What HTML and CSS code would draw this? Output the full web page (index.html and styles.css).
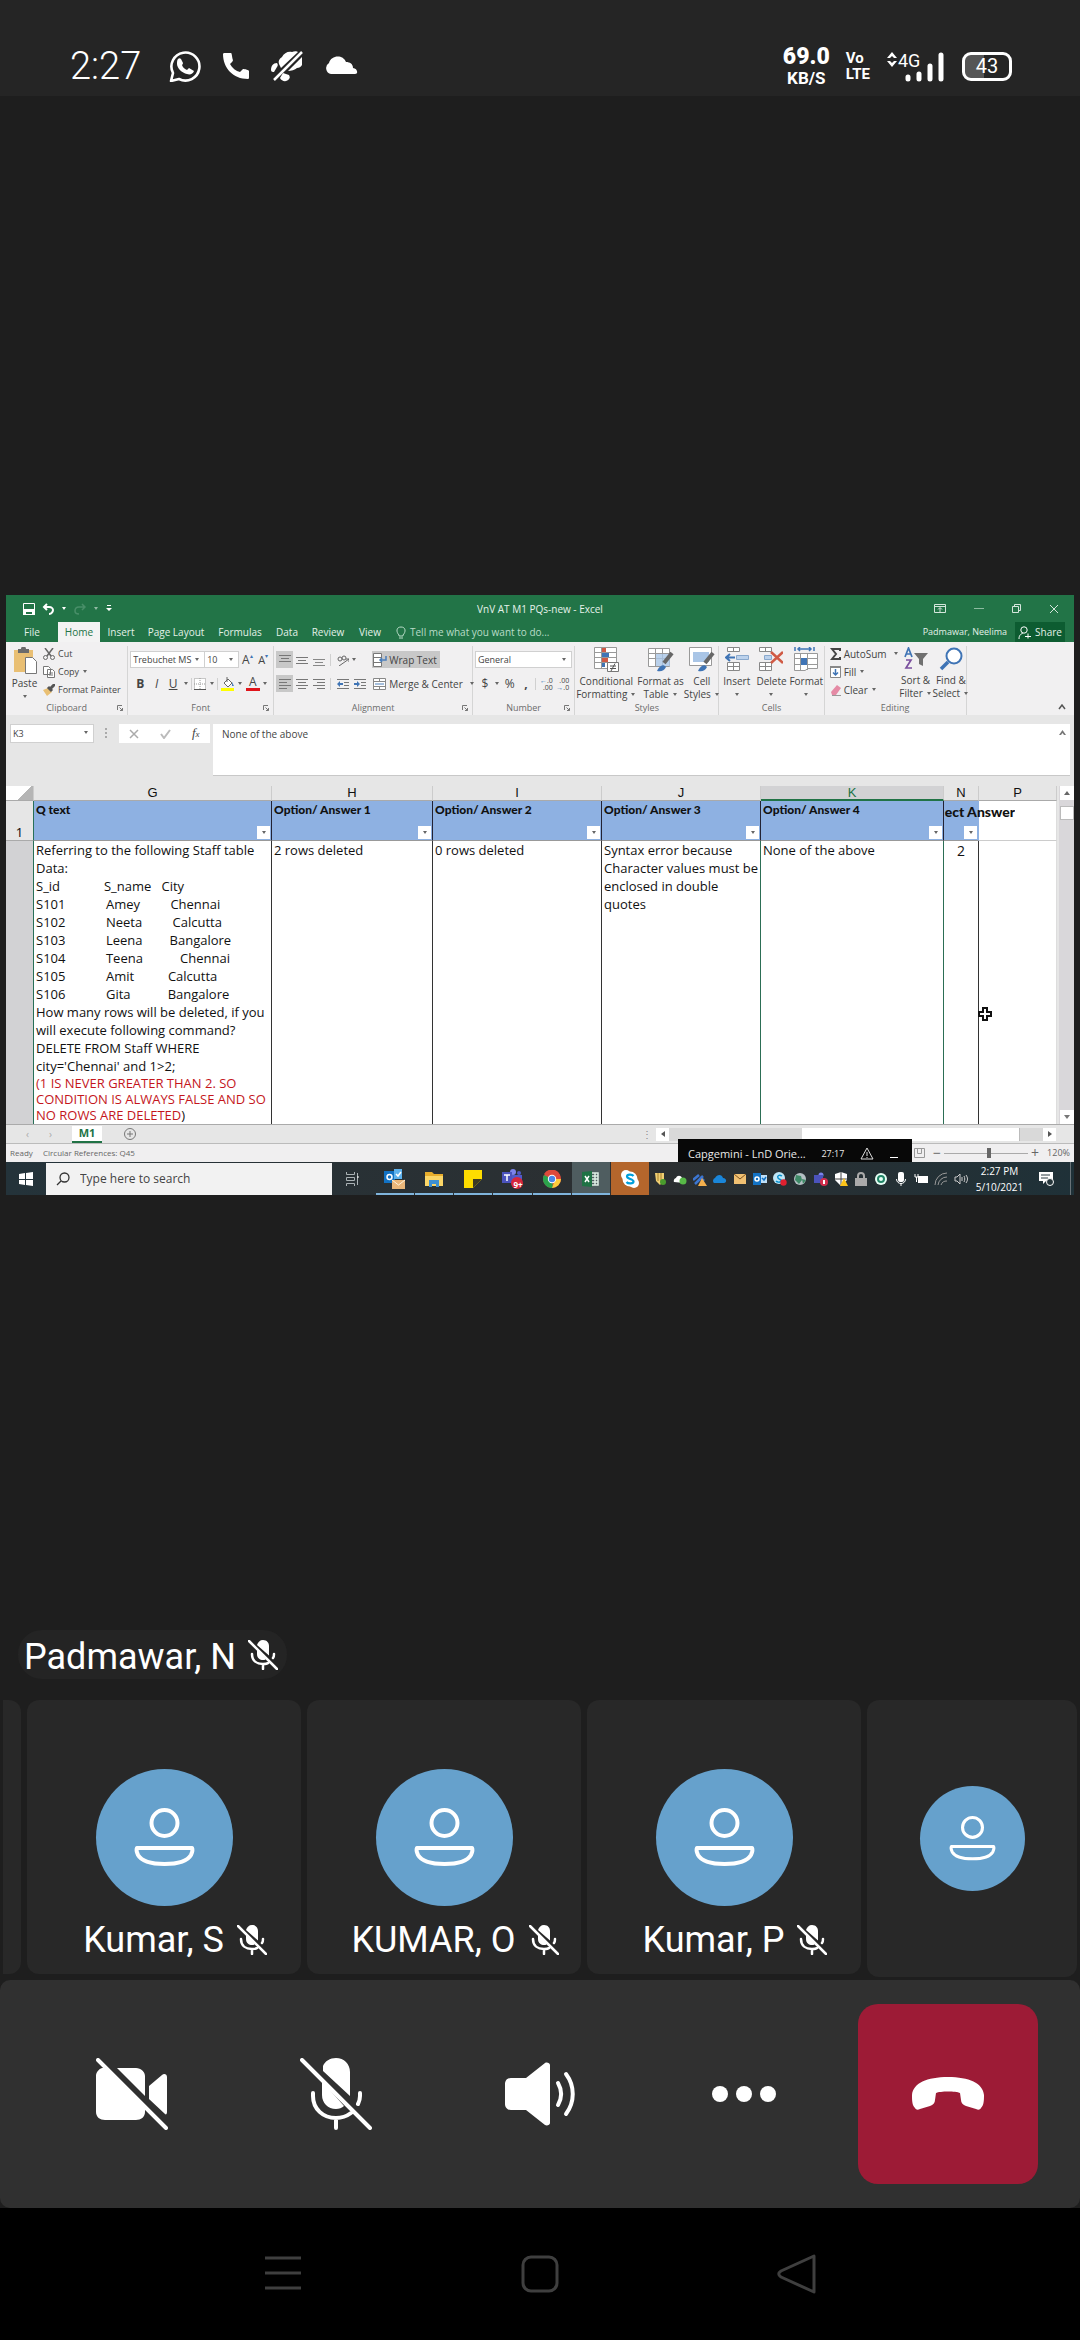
FILE: index.html
```html
<!DOCTYPE html>
<html lang="en">
<head>
<meta charset="utf-8">
<meta name="viewport" content="width=device-width, initial-scale=1">
<title>Meeting</title>
<link rel="stylesheet" href="styles.css">
</head>
<body>
<svg class="defs" aria-hidden="true">
  <symbol id="mic-off" viewBox="0 0 72 72">
    <path fill="currentColor" d="M23 8c2-5 7-8 13-8 8 0 14 6 14 14v24L23 13zM22 23v14c0 8 6 14 14 14 3 0 6-1 8-3z"/>
    <path fill="none" stroke="currentColor" stroke-width="4" stroke-linecap="round" d="M13 35v3c0 13 10 22 23 22 6 0 11-2 15-5M60 35v3c0 3-1 6-2 8M36 60v10M2 2l68 68"/>
  </symbol>
  <symbol id="mic-off-bold" viewBox="0 0 30 30">
    <path fill="currentColor" d="M9 5c1-3 3-5 6-5 4 0 6 3 6 6v9.500zM9 10v4c0 4 3 6 6 6 1 0 2 0 3-1z"/>
    <path fill="none" stroke="currentColor" stroke-width="2.500" stroke-linecap="round" d="M4 14c0 7 5 10 11 10 2 0 4 0 5-1M26 14c0 1 0 3-1 4M15 24v5M1 1l28 28"/>
  </symbol>
  <symbol id="person" viewBox="0 0 137 137">
    <g fill="none" stroke="#fff" stroke-width="4"><circle cx="68.500" cy="54" r="13"/><path stroke-linejoin="round" d="M41 79h55c1 2 0 5-1 7-4 7-14 9-26.500 9S46 93 42 86c-1-2-2-5-1-7z"/></g>
  </symbol>
  <symbol id="caret" viewBox="0 0 6 4"><path fill="#666" d="M1 0h4L3 3z"/></symbol>
  <symbol id="lines" viewBox="0 0 12 12"><path stroke="#777" d="M0 1.500h12M2 4.500h8M0 7.500h12M2 10.500h8"/></symbol>
  <symbol id="launcher" viewBox="0 0 6 6"><path fill="none" stroke="#777" d="M.5 5V.5H5M2.500 2.500l3 3M5.500 3v2.500H3"/></symbol>
</svg>

<header class="statusbar">
  <div class="status-left">
    <time class="clock">2:27</time>
    <svg width="32" height="32" viewBox="0 0 32 32" fill="none" stroke="#fff"><path stroke-width="2.600" stroke-linejoin="round" d="M2 31l2-8A14 14 0 1 1 10 29z"/><path fill="#fff" stroke="none" d="M9 9c1-1 2-1 3 0l2 4c0 1-1 2-1 2 1 3 3 4 5 5l2-2 5 3c-1 3-4 4-7 3-5-1-10-6-10-10 0-2 0-4 1-5z"/></svg>
    <svg width="26" height="28" viewBox="0 0 26 28" fill="#fff"><path d="M0 2c0-1 1-1 2-1h6c1 0 1 5 2 7 0 1-1 2-3 4 2 4 6 7 10 8l3-3c2 0 6 1 6 2v6c0 1 0 2-1 2C10 27 0 16 0 2z"/></svg>
    <svg width="32" height="32" viewBox="0 0 32 32"><path fill="#fff" d="M8 14c-1-3 0-5 3-7 2-4 6-6 10-5 2-1 5-1 6 0L10 18zM31 7v8c-1 2-3 3-5 3-2 2-6 3-9 3zM6 13c-4 0-6 3-6 7 0 2 2 2 3 2l3-5c1-1 1-3 0-4zM12 23l6 2c1 2 1 3 0 4-2 3-7 3-9-1z"/><path stroke="#fff" stroke-width="2.500" d="M3 30L31 2"/></svg>
    <svg width="33" height="20" viewBox="0 0 33 20" fill="#fff"><path d="M6 18a6 6 0 0 1-2-11C6-1 18-2 21 6c4 0 7 2 7 6 4 0 6 6 2 6z"/></svg>
  </div>
  <div class="status-right">
    <div class="speed"><b>69.0</b><small>KB/S</small></div>
    <div class="volte"><span>Vo</span><span>LTE</span></div>
    <svg class="signal" width="60" height="34" viewBox="0 0 60 34"><path fill="#fff" d="M1 9l5-6 5 6H8L6 7 4 9zM1 12h3l2 2 2-2h3l-5 6z"/><g stroke="#fff" stroke-width="5" stroke-linecap="round"><path d="M22 28v2M33 25v5M44 17v13M55 6v24"/></g><text x="12" y="18" fill="#fff">4G</text></svg>
    <div class="battery">43</div>
  </div>
</header>

<main class="stage">
  <section class="desktop" aria-label="Shared screen">
    <div class="titlebar">
      <div class="quick">
        <svg width="12" height="12" viewBox="0 0 12 12"><path fill="none" stroke="#fff" d="M.5.5h11v11H.5z"/><path fill="#fff" d="M0 6h12v6H9V9H3v3H0z"/></svg>
        <svg width="12" height="12" viewBox="0 0 12 12"><path fill="none" stroke="#fff" stroke-width="2" d="M5 1L2 4l3 3M2 4h5c3 0 4 2 4 3s-1 4-4 4"/></svg>
        <svg class="white" width="6" height="4"><use href="#caret"/></svg>
        <svg class="faint" width="12" height="12" viewBox="0 0 12 12"><path fill="none" stroke="#6fa98a" stroke-width="1.500" d="M8 1l3 3-3 3M11 4H5C2 4 1 6 1 8s1 3 4 3"/></svg>
        <svg class="dim" width="6" height="4"><use href="#caret"/></svg>
        <svg width="6" height="7" viewBox="0 0 6 7" fill="#fff"><path d="M1 0h4v1H1zM0 3h6L3 6z"/></svg>
      </div>
      <h1>VnV AT M1 PQs-new - Excel</h1>
      <div class="winbtns">
        <button aria-label="Ribbon options"><svg width="12" height="9" viewBox="0 0 12 9" fill="none" stroke="#d5e6dc"><path d="M.5.5h11v8H.5zM.5 2.500h11M6 8V4M4 5.500l2-2 2 2"/></svg></button>
        <button aria-label="Minimize"><svg width="10" height="9" viewBox="0 0 10 9" stroke="#8dbba0"><path d="M0 4.500h10"/></svg></button>
        <button aria-label="Restore"><svg width="9" height="9" viewBox="0 0 9 9" fill="none" stroke="#d5e6dc"><path d="M.5 2.500h6v6h-6zM2.500 2V.5h6v6H7"/></svg></button>
        <button aria-label="Close"><svg width="10" height="10" viewBox="0 0 10 10" stroke="#d5e6dc"><path d="M1 1l8 8M9 1L1 9"/></svg></button>
      </div>
    </div>
    <nav class="tabs">
      <a class="tab file" href="#">File</a><a class="tab home" href="#">Home</a><a class="tab insert" href="#">Insert</a><a class="tab layout" href="#">Page Layout</a><a class="tab formulas" href="#">Formulas</a><a class="tab data" href="#">Data</a><a class="tab review" href="#">Review</a><a class="tab view" href="#">View</a>
      <a class="tell" href="#"><svg width="10" height="13" viewBox="0 0 10 13" fill="none" stroke="#b9dcc8"><path d="M3 9C0 6 0 1 5 1s5 5 2 8v1H3zM3 12h4"/></svg>Tell me what you want to do...</a>
      <span class="user">Padmawar, Neelima</span>
      <button class="share"><svg width="13" height="13" viewBox="0 0 13 13" fill="none" stroke="#fff"><circle cx="6" cy="4" r="3.200"/><path d="M1 13c0-4 2-5 4-6M7 10.500h6M10 7.500v5"/></svg>Share</button>
    </nav>

    <div class="ribbon">
      <section class="group g-clip">
        <div class="body">
          <button class="big"><svg width="24" height="27" viewBox="0 0 24 27"><path fill="#e9bf73" d="M1 3h19v22H1z"/><path fill="#6b6b6b" d="M5 2h3a2.500 2.500 0 0 1 5 0h3v4H5z"/><path fill="#fff" stroke="#777" d="M12.500 10.500h7l4 4v12h-11z"/></svg>Paste<svg class="c" width="6" height="4"><use href="#caret"/></svg></button>
          <div class="stack">
            <button><svg width="12" height="12" viewBox="0 0 12 12" fill="none" stroke="#666"><path stroke-width="1.500" d="M2 0l6 8M10 0L4 8"/><circle cx="2.500" cy="9.500" r="2"/><circle cx="9.500" cy="9.500" r="2"/></svg>Cut</button>
            <button><svg width="12" height="12" viewBox="0 0 12 12" fill="#fff" stroke="#777"><path d="M.5.5h5l2 2v6h-7zM4.500 3.500h5l2 2v6h-7zM6 7h4M6 9h4"/></svg>Copy <svg width="6" height="4"><use href="#caret"/></svg></button>
            <button><svg width="12" height="12" viewBox="0 0 12 12"><path fill="#e9bf73" d="M0 6l5-2 4 4-5 4z"/><path stroke="#555" stroke-width="3" d="M5 3l4 4M8 4l4-4"/></svg>Format Painter</button>
          </div>
        </div>
        <h2>Clipboard<svg width="6" height="6"><use href="#launcher"/></svg></h2>
      </section>
      <section class="group g-font">
        <div class="body rows">
          <div class="row">
            <label class="combo face"><select aria-label="Font"><option>Trebuchet MS</option></select><svg width="6" height="4"><use href="#caret"/></svg></label>
            <label class="combo size"><select aria-label="Font size"><option>10</option></select><svg width="6" height="4"><use href="#caret"/></svg></label>
            <button class="grow a1">A<sup>▴</sup></button><button class="grow a2">A<sup>▾</sup></button>
          </div>
          <div class="row spread">
            <button><b>B</b></button><button><i>I</i></button><button><u>U</u></button><svg width="6" height="4"><use href="#caret"/></svg><hr>
            <svg width="12" height="12" viewBox="0 0 12 12" fill="#fff" stroke="#999"><path stroke-dasharray="1 1" d="M.5.5h11v11H.5zM6 0v12M0 6h12"/><path stroke="#555" d="M0 11.500h12"/></svg><svg width="6" height="4"><use href="#caret"/></svg><hr>
            <svg width="14" height="14" viewBox="0 0 14 14"><path fill="#fff" stroke="#666" d="M3 6l4-4 4 4-4 4zM6 0v5"/><path fill="#4a7ebb" d="M11 5l2 4h-2z"/><path fill="#ff0" d="M0 11h13v3H0z"/></svg><svg width="6" height="4"><use href="#caret"/></svg>
            <button class="red">A</button><svg width="6" height="4"><use href="#caret"/></svg>
          </div>
        </div>
        <h2>Font<svg width="6" height="6"><use href="#launcher"/></svg></h2>
      </section>
      <section class="group g-align">
        <div class="body rows">
          <div class="row">
            <div class="tools">
              <button class="ic on"><svg width="12" height="12" viewBox="0 0 12 12"><path stroke="#777" d="M0 1.500h12M2 4.500h8M0 7.500h12"/></svg></button>
              <button class="ic"><svg width="12" height="12" viewBox="0 0 12 12"><path stroke="#777" d="M0 3.500h12M2 6.500h8M0 9.500h12"/></svg></button>
              <button class="ic"><svg width="12" height="12" viewBox="0 0 12 12"><path stroke="#888" d="M0 5.500h12M2 8.500h8M0 11.500h12"/></svg></button><hr>
              <button class="ic"><svg width="12" height="12" viewBox="0 0 12 12" fill="none" stroke="#666"><circle cx="3" cy="5" r="2"/><circle cx="7" cy="4" r="2"/><path d="M2 12L12 5M9 5h3v3"/></svg></button><svg width="6" height="4"><use href="#caret"/></svg>
            </div>
            <button class="wide on"><svg width="14" height="14" viewBox="0 0 14 14" fill="#fff" stroke="#777"><path d="M.5.5h8v13h-8zM.5 4.500h8M.5 9.500h8"/><path fill="none" stroke="#4a7ebb" stroke-width="1.500" d="M13 3v4H7M9 5L7 7l2 2"/></svg>Wrap Text</button>
          </div>
          <div class="row">
            <div class="tools">
              <button class="ic on"><svg width="12" height="12" viewBox="0 0 12 12"><path stroke="#777" d="M0 1.500h12M0 4.500h8M0 7.500h12M0 10.500h8"/></svg></button>
              <button class="ic"><svg width="12" height="12"><use href="#lines"/></svg></button>
              <button class="ic"><svg width="12" height="12" viewBox="0 0 12 12"><path stroke="#777" d="M0 1.500h12M4 4.500h8M0 7.500h12M4 10.500h8"/></svg></button><hr>
              <button class="ic"><svg width="12" height="12" viewBox="0 0 12 12"><path stroke="#777" d="M0 1.500h12M7 4.500h5M7 7.500h5M0 10.500h12"/><path fill="#3f74b5" d="M0 6l3-3v2h3v2H3v2z"/></svg></button>
              <button class="ic"><svg width="12" height="12" viewBox="0 0 12 12"><path stroke="#777" d="M0 1.500h12M7 4.500h5M7 7.500h5M0 10.500h12"/><path fill="#3f74b5" d="M6 6L3 3v2H0v2h3v2z"/></svg></button>
            </div>
            <button class="wide"><svg width="14" height="12" viewBox="0 0 14 12" fill="#fff" stroke="#888"><path d="M.5.5h12v11H.5zM.5 3.500h12M.5 8.500h12M6.500.5v3M6.500 8.500v3"/><path stroke="#4a7ebb" d="M2 6h9"/></svg>Merge &amp; Center<svg class="c" width="6" height="4"><use href="#caret"/></svg></button>
          </div>
        </div>
        <h2>Alignment<svg width="6" height="6"><use href="#launcher"/></svg></h2>
      </section>
      <section class="group g-num">
        <div class="body rows">
          <div class="row"><label class="combo full"><select aria-label="Number format"><option>General</option></select><svg width="6" height="4"><use href="#caret"/></svg></label></div>
          <div class="row spread">
            <button class="sym">$</button><svg width="6" height="4"><use href="#caret"/></svg><button class="sym">%</button><button class="sym"><b>,</b></button><hr>
            <button class="dec"><span><em>←</em>.0</span><span>.00</span></button><button class="dec"><span>.00</span><span><em>→</em>.0</span></button>
          </div>
        </div>
        <h2>Number<svg width="6" height="6"><use href="#launcher"/></svg></h2>
      </section>
      <section class="group g-styles">
        <div class="body">
          <button class="big cf"><svg width="25" height="25" viewBox="0 0 25 25"><path fill="#fff" stroke="#999" d="M.5.5h22v21H.5zM.5 5.500h22M.5 10.500h22M.5 15.500h22M7.500.5v21"/><path fill="#d05a45" d="M8 1h4v4H8zM8 11h6v4H8z"/><path fill="#3f74b5" d="M8 6h7v4H8zM8 16h3v4H8z"/><path fill="#fff" stroke="#777" d="M13.500 15.500h11v9h-11z"/><path stroke="#555" d="M16 19h6M16 21.500h6M21 16.500L17 24"/></svg>Conditional<span>Formatting <svg width="6" height="4"><use href="#caret"/></svg></span></button>
          <button class="big ft"><svg width="26" height="25" viewBox="0 0 26 25"><path fill="#fff" stroke="#999" d="M.5 1.500h21v18H.5zM.5 6.500h21M.5 11.500h21M7.500 1.500v18M14.500 1.500v18"/><path fill="#a9c5e6" opacity=".8" d="M8 7h14v12H8z"/><path stroke="#666" stroke-width="4" d="M24 6l-8 10"/><path fill="#3f74b5" d="M9 24c2-5 6-8 9-4-2 4-5 5-9 4z"/></svg>Format as<span>Table <svg width="6" height="4"><use href="#caret"/></svg></span></button>
          <button class="big cs"><svg width="26" height="25" viewBox="0 0 26 25"><path fill="#fff" stroke="#999" d="M.5.5h22v18H.5z"/><path fill="#a9c5e6" d="M4 5h16v10H4z"/><path stroke="#666" stroke-width="4" d="M24 6l-8 10"/><path fill="#3f74b5" d="M9 24c2-5 6-8 9-4-2 4-5 5-9 4z"/></svg>Cell<span>Styles <svg width="6" height="4"><use href="#caret"/></svg></span></button>
        </div>
        <h2>Styles</h2>
      </section>
      <section class="group g-cells">
        <div class="body">
          <button class="big"><svg width="24" height="25" viewBox="0 0 24 25"><path fill="#fff" stroke="#888" d="M2.500.5h12v4h-12zM8.500.5v4M2.500 15.500h12v8h-12zM8.500 15.500v8M2.500 19.500h12"/><path fill="#bcd2ec" stroke="#8aa9cc" d="M11.500 8.500h12v4h-12z"/><path fill="none" stroke="#3f74b5" stroke-width="2" d="M10 10.500H2M5 7l-4 3.500L5 14"/></svg>Insert<svg class="c" width="6" height="4"><use href="#caret"/></svg></button>
          <button class="big"><svg width="24" height="25" viewBox="0 0 24 25"><path fill="#fff" stroke="#888" d="M.5.5h12v4H.5zM6.500.5v4M.5 15.500h12v8H.5zM6.500 15.500v8M.5 19.500h12"/><path fill="#bcd2ec" stroke="#8aa9cc" d="M5.500 8.500h7v4h-7z"/><path stroke="#d05a45" stroke-width="2.500" d="M12 5l12 11M24 5L12 16"/></svg>Delete<svg class="c" width="6" height="4"><use href="#caret"/></svg></button>
          <button class="big"><svg width="24" height="25" viewBox="0 0 24 25"><path fill="none" stroke="#3f74b5" stroke-width="1.500" d="M1 0v4M20 0v4M4 2h13M6 0L4 2l2 2M15 0l2 2-2 2"/><path fill="#fff" stroke="#999" d="M.5 6.500h23v15H14l-3 2H.5zM.5 11.500h23M.5 17.500h23M6.500 6v17M13.500 6v17"/><path fill="#3f74b5" d="M7 11h6v7H7z"/></svg>Format<svg class="c" width="6" height="4"><use href="#caret"/></svg></button>
        </div>
        <h2>Cells</h2>
      </section>
      <section class="group g-edit">
        <div class="body">
          <div class="stack">
            <button><svg width="11" height="12" viewBox="0 0 11 12"><path fill="none" stroke="#444" stroke-width="2" d="M10 3V1H2l4 5-4 5h8V9"/></svg>AutoSum <svg class="c2" width="6" height="4"><use href="#caret"/></svg></button>
            <button><svg width="11" height="12" viewBox="0 0 11 12"><path fill="#fff" stroke="#888" d="M.5.5h10v11H.5z"/><path fill="#888" d="M0 0h11v2H0z"/><path fill="none" stroke="#3f74b5" stroke-width="1.500" d="M5.500 3v6M3 6.500L5.500 9 8 6.500"/></svg>Fill <svg width="6" height="4"><use href="#caret"/></svg></button>
            <button><svg width="11" height="12" viewBox="0 0 11 12"><path fill="#e58aa5" d="M1 8l6-7 4 3-5 7H2z"/><path stroke="#999" d="M2 11.500h9"/></svg>Clear <svg width="6" height="4"><use href="#caret"/></svg></button>
          </div>
          <button class="big sf"><svg width="24" height="24" viewBox="0 0 24 24"><path fill="none" stroke="#3f74b5" stroke-width="1.700" d="M1 10l3.500-9L8 10M2 7h5"/><path fill="none" stroke="#7a4f9e" stroke-width="1.700" d="M2 13h5l-5 8h6"/><path fill="#707070" d="M10 6h14l-5 6v7l-4-2v-5z"/></svg>Sort &amp;<span>Filter <svg width="6" height="4"><use href="#caret"/></svg></span></button>
          <button class="big fs"><svg width="24" height="24" viewBox="0 0 24 24"><circle cx="15" cy="9" r="7.500" fill="#fff" stroke="#3f74b5" stroke-width="2"/><path stroke="#3f74b5" stroke-width="3.500" d="M9 15l-7 7"/></svg>Find &amp;<span>Select <svg width="6" height="4"><use href="#caret"/></svg></span></button>
        </div>
        <h2>Editing</h2>
      </section>
      <button class="collapse" aria-label="Collapse ribbon"><svg width="8" height="6" viewBox="0 0 8 6" fill="none" stroke="#555" stroke-width="1.500"><path d="M1 5l3-4 3 4"/></svg></button>
    </div>

    <div class="formulabar">
      <label class="combo name"><input value="K3" aria-label="Name box"><svg width="6" height="4"><use href="#caret"/></svg></label>
      <svg class="grip" width="2" height="10" viewBox="0 0 2 10" fill="#aaa"><path d="M0 0h2v2H0zM0 4h2v2H0zM0 8h2v2H0z"/></svg>
      <div class="fx"><svg width="10" height="10" viewBox="0 0 10 10" stroke="#aaa" stroke-width="1.500"><path d="M1 1l8 8M9 1L1 9"/></svg><svg width="11" height="10" viewBox="0 0 11 10" fill="none" stroke="#bbb" stroke-width="2"><path d="M1 5l3 4 6-8"/></svg><i>f<small>x</small></i></div>
      <div class="formula"><textarea aria-label="Formula bar">None of the above</textarea><svg width="7" height="6" viewBox="0 0 7 6"><path fill="#777" d="M0 5l3.500-5L7 5H5L3.500 3 2 5z"/></svg></div>
    </div>

    <div class="grid">
      <table>
        <colgroup><col class="w-n"><col class="w-g"><col class="w-h"><col class="w-i"><col class="w-j"><col class="w-k"><col class="w-nn"><col class="w-p"></colgroup>
        <thead><tr><th class="corner"></th><th>G</th><th>H</th><th>I</th><th>J</th><th class="sel">K</th><th>N</th><th>P</th></tr></thead>
        <tbody>
          <tr class="head">
            <th>1</th>
            <td>Q text<button aria-label="Filter"><svg width="6" height="4"><use href="#caret"/></svg></button></td>
            <td>Option/ Answer 1<button aria-label="Filter"><svg width="6" height="4"><use href="#caret"/></svg></button></td>
            <td>Option/ Answer 2<button aria-label="Filter"><svg width="6" height="4"><use href="#caret"/></svg></button></td>
            <td>Option/ Answer 3<button aria-label="Filter"><svg width="6" height="4"><use href="#caret"/></svg></button></td>
            <td>Option/ Answer 4<button aria-label="Filter"><svg width="6" height="4"><use href="#caret"/></svg></button></td>
            <td class="spill"><span>ect Answer</span><button aria-label="Filter"><svg width="6" height="4"><use href="#caret"/></svg></button></td>
            <td class="blank"></td>
          </tr>
          <tr class="cells">
            <th></th>
            <td><p>Referring to the following Staff table
Data:
S_id             S_name   City
S101            Amey         Chennai
S102            Neeta         Calcutta
S103            Leena        Bangalore
S104            Teena           Chennai
S105            Amit          Calcutta
S106            Gita           Bangalore
How many rows will be deleted, if you
will execute following command?
DELETE FROM Staff WHERE
city='Chennai' and 1&gt;2;</p><p class="note">(1 IS NEVER GREATER THAN 2. SO
CONDITION IS ALWAYS FALSE AND SO
NO ROWS ARE DELETED<span>)</span></p></td>
            <td>2 rows deleted</td>
            <td>0 rows deleted</td>
            <td>Syntax error because
Character values must be
enclosed in double
quotes</td>
            <td>None of the above</td>
            <td class="ans">2</td>
            <td></td>
          </tr>
        </tbody>
      </table>
      <div class="vscroll"><button aria-label="Up"><svg width="6" height="4" viewBox="0 0 6 4"><path fill="#666" d="M0 4l3-4 3 4z"/></svg></button><span class="thumb"></span><button class="down" aria-label="Down"><svg width="6" height="4" viewBox="0 0 6 4"><path fill="#777" d="M0 0h6L3 4z"/></svg></button></div>
      <svg class="cursor" width="14" height="14" viewBox="0 0 14 14"><path fill="#fff" stroke="#111" stroke-width="2" d="M5 1h4v4h4v4H9v4H5V9H1V5h4z"/></svg>
    </div>

    <div class="sheets">
      <div class="arrows"><span>‹</span><span>›</span></div>
      <button class="sheet">M1</button>
      <svg class="plus" width="12" height="12" viewBox="0 0 12 12" fill="none" stroke="#777"><circle cx="6" cy="6" r="5.500"/><path d="M3 6h6M6 3v6"/></svg>
      <div class="hscroll"><span class="dots">⋮</span><button aria-label="Left"><svg width="4" height="6" viewBox="0 0 4 6"><path fill="#555" d="M4 0v6L0 3z"/></svg></button><span class="track"><span class="thumb"></span></span><button aria-label="Right"><svg width="4" height="6" viewBox="0 0 4 6"><path fill="#555" d="M0 0v6l4-3z"/></svg></button></div>
    </div>
    <div class="xlstatus">
      <span class="ready">Ready</span><span>Circular References: Q45</span>
      <div class="zoom"><svg width="11" height="10" viewBox="0 0 11 10" fill="none" stroke="#999"><path d="M.5.5h10v9H.5zM3.500.5v5M7.500.5v5M3.500 5.500h4"/></svg><span class="pm">−</span><input type="range" min="0" max="100" value="54" aria-label="Zoom"><span class="pm">+</span><span class="pct">120%</span></div>
    </div>
    <div class="toast"><span>Capgemini - LnD Orie...</span><time>27:17</time><svg width="14" height="13" viewBox="0 0 14 13" fill="none" stroke="#ddd"><path d="M7 1l6 11H1zM7 5v4M7 10v1"/></svg><svg width="8" height="12" viewBox="0 0 8 12"><path fill="#fff" d="M0 9h8v1H0z"/></svg></div>

    <footer class="taskbar">
      <button class="start" aria-label="Start"><svg width="14" height="14" viewBox="0 0 14 14" fill="#fff"><path d="M0 2l6-1v6H0zM7 1l7-1v7H7zM0 8h6v5l-6-1zM7 8h7v6l-7-1z"/></svg></button>
      <label class="search"><svg width="14" height="14" viewBox="0 0 14 14" fill="none" stroke="#333" stroke-width="1.300"><circle cx="8.500" cy="5.500" r="4.500"/><path d="M5 9l-4 4"/></svg><input aria-label="Search" placeholder="Type here to search"></label>
      <div class="apps">
        <span class="taskview"><svg width="14" height="14" viewBox="0 0 14 14" fill="none" stroke="#aab2b5"><path d="M1.500 0v2.500h8V0M1.500 5.500h8v3h-8zM1.500 14v-2.500h8V14M12.500 1v12"/><path stroke="#fff" d="M12 5h2"/></svg></span>
        <span class="run"><svg width="22" height="20" viewBox="0 0 22 20"><path fill="#1272c4" d="M0 2h11v12H0z"/><path fill="#5db1ec" d="M10 0h8v10h-8z"/><circle cx="5.500" cy="8" r="2.500" fill="none" stroke="#fff" stroke-width="1.500"/><path fill="none" stroke="#fff" stroke-width="1.500" d="M12 5l2 2 3-4"/><path fill="#eab77a" d="M8 11h13v9H8z"/><path fill="none" stroke="#fff3df" d="M8 11l6.500 5 6.500-5"/></svg></span>
        <span class="run"><svg width="18" height="16" viewBox="0 0 18 16"><path fill="#e8ad2c" d="M0 1h7l2 2h9v12H0z"/><path fill="#fbd667" d="M0 5h18v10H0z"/><path fill="#3e8fd0" d="M4 9h10v7h-3v-3H7v3H4z"/></svg></span>
        <span class="run"><svg width="18" height="18" viewBox="0 0 18 18"><path fill="#fddc00" d="M0 0h18v9l-9 9H0z"/><path fill="#3c3a24" d="M9 18V9h9z"/></svg></span>
        <span class="run"><svg width="21" height="20" viewBox="0 0 21 20"><circle cx="11" cy="3" r="3" fill="#7b83eb"/><circle cx="17" cy="4" r="2" fill="#5059c9"/><path fill="#5059c9" d="M8 6h12v8H8z"/><path fill="#4b53bc" d="M0 3h10v11H0z"/><path stroke="#fff" stroke-width="1.500" d="M2 6h6M5 6v6"/><circle cx="15" cy="14" r="6" fill="#d6263c"/></svg><small class="nine">9+</small></span>
        <span class="run"><svg width="18" height="18" viewBox="0 0 18 18"><circle cx="9" cy="9" r="9" fill="#dd4a3c"/><path fill="#2ba24c" d="M1 5l8 4 1 9A9 9 0 0 1 1 5z"/><path fill="#fdcd3b" d="M9 9h9a9 9 0 0 1-9 9l3-8z"/><path fill="#dd4a3c" d="M1 4a9 9 0 0 1 16 1H9z"/><circle cx="9" cy="9" r="4.200" fill="#fff"/><circle cx="9" cy="9" r="3.200" fill="#4a86e8"/></svg></span>
        <span class="run active"><svg width="17" height="16" viewBox="0 0 17 16"><path fill="#1f7245" d="M0 1l10-1v16L0 15z"/><path stroke="#fff" stroke-width="1.500" d="M3 5l4 6M7 5l-4 6"/><path fill="none" stroke="#dfeee5" stroke-width="1.500" d="M10 2h6v12h-6M13 2v12M10 5h6M10 8h6M10 11h6"/></svg></span>
        <span class="run skype"><svg width="18" height="18" viewBox="0 0 18 18"><circle cx="9" cy="9" r="7.500" fill="#fff"/><circle cx="5" cy="5" r="5" fill="#fff"/><circle cx="13" cy="13" r="5" fill="#fff"/><path fill="none" stroke="#00a0dc" stroke-width="2.200" d="M12.500 6C11 4 6 4 6 6.500S12.500 9 12.500 11.500 7 14 5.500 12"/></svg></span>
      </div>
      <div class="tray">
        <svg viewBox="0 0 14 14"><path fill="#f0cf73" d="M2 1h9v7l-4 5-4-4z"/><path stroke="#a77f2c" d="M5 1v8M8 1v8"/><circle cx="10" cy="10" r="3" fill="#4a9c2d"/></svg>
        <svg viewBox="0 0 14 14"><path fill="#fff" d="M1 10a3 3 0 0 1 2-4c1-3 5-3 6 0 3 0 4 4 2 5z"/><circle cx="10" cy="9" r="3.500" fill="#57b947"/></svg>
        <svg viewBox="0 0 14 14"><path stroke="#3c76d2" stroke-width="2.500" d="M0 8l6-5M2 12l8-8M7 5l4 4"/><path fill="#f4b04d" d="M9 6l5 8H5z"/></svg>
        <svg viewBox="0 0 14 14"><path fill="#1a86d9" d="M1 11a3 3 0 0 1 1-5c2-4 7-4 8 0 4 0 4 5 1 5z"/></svg>
        <svg viewBox="0 0 14 14"><path fill="#f0c072" d="M1 2h12v10H1z"/><path fill="none" stroke="#7d5420" d="M1 2l6 5 6-5"/></svg>
        <svg viewBox="0 0 14 14"><path fill="#1272c4" d="M0 1h8v12H0z"/><path fill="#bfe0f8" d="M8 3h6v8H8z"/><circle cx="4" cy="7" r="2" fill="none" stroke="#fff" stroke-width="1.500"/><path fill="none" stroke="#1272c4" stroke-width="1.500" d="M9 6l2 2 2-3"/></svg>
        <svg viewBox="0 0 14 14"><circle cx="6" cy="6" r="6" fill="#bfe6f7"/><path fill="none" stroke="#078fcd" stroke-width="1.500" d="M9 4C6 2 4 4 5 6s4 1 3 3-4 1-5 0"/><circle cx="10.500" cy="10.500" r="3.200" fill="#e0202f"/></svg>
        <svg viewBox="0 0 14 14"><circle cx="7" cy="7" r="6" fill="#b4c0c4"/><path fill="#3e8a67" d="M3 3l5 1 1 4-3 4-4-4zM9 7l4 1-3 4z"/></svg>
        <svg viewBox="0 0 14 14"><circle cx="7" cy="3" r="2.500" fill="#7b83eb"/><path fill="#4b53bc" d="M0 3h9v8H0z"/><circle cx="10" cy="10" r="4" fill="#d12e4c"/><path stroke="#fff" stroke-width="2" d="M10 8v4"/></svg>
        <svg viewBox="0 0 14 14"><path fill="#fff" d="M1 2l6-2 6 2v6l-6 6-6-6z"/><path stroke="#444" d="M7 0v14M1 7h12"/><path fill="#fcc419" d="M10 6l4 8H6z"/></svg>
        <svg viewBox="0 0 14 14"><path fill="none" stroke="#aaa" stroke-width="2" d="M4 7V4a3 3 0 0 1 6 0v3"/><path fill="#aaa" d="M1 6h12v8H1z"/></svg>
        <svg viewBox="0 0 14 14"><circle cx="7" cy="7" r="6" fill="#e8fff6"/><circle cx="7" cy="7" r="3" fill="none" stroke="#238668" stroke-width="2"/></svg>
        <svg viewBox="0 0 14 14"><rect x="4" width="6" height="10" rx="2" fill="#fff"/><path fill="none" stroke="#fff" d="M2.500 7c0 6 9 6 9 0M7 11v3"/></svg>
        <svg viewBox="0 0 14 14"><path fill="#fff" d="M4 4h10v7H4z"/><path fill="none" stroke="#fff" d="M1 2v3h3V2M2.500 5v5"/></svg>
        <svg viewBox="0 0 14 14" fill="none" stroke="#999"><path d="M1 13A12 12 0 0 1 13 1M4 13a9 9 0 0 1 9-8M7 13a6 6 0 0 1 6-4"/></svg>
        <svg viewBox="0 0 14 14" fill="none" stroke="#ccc"><path d="M1 5h2l3-3v10L3 9H1zM8 5v4M10 4c1 2 1 4 0 6M12 3c2 3 2 5 0 8"/></svg>
      </div>
      <div class="datetime"><span>2:27 PM</span><span>5/10/2021</span></div>
      <svg class="notif" width="15" height="15" viewBox="0 0 15 15"><path fill="#fff" d="M0 1h14v9H7l-3 3v-3H0z"/><path stroke="#2b3a40" d="M2 4h9M2 7h7"/><circle cx="11" cy="11" r="3.500" fill="#26363b" stroke="#fff"/></svg>
      <span class="edge"></span>
    </footer>
  </section>

  <div class="speaker"><span>Padmawar, N</span><svg width="30" height="30"><use href="#mic-off-bold"/></svg></div>
</main>

<section class="people" aria-label="Participants">
  <article class="tile cut"></article>
  <article class="tile"><svg class="avatar" viewBox="0 0 137 137"><use href="#person"/></svg><div class="name-row"><span>Kumar, S</span><svg width="30" height="30"><use href="#mic-off-bold"/></svg></div></article>
  <article class="tile"><svg class="avatar" viewBox="0 0 137 137"><use href="#person"/></svg><div class="name-row"><span>KUMAR, O</span><svg width="30" height="30"><use href="#mic-off-bold"/></svg></div></article>
  <article class="tile"><svg class="avatar" viewBox="0 0 137 137"><use href="#person"/></svg><div class="name-row"><span>Kumar, P</span><svg width="30" height="30"><use href="#mic-off-bold"/></svg></div></article>
  <article class="tile me"><svg class="avatar" viewBox="0 0 137 137"><use href="#person"/></svg></article>
</section>

<div class="controls">
  <button aria-label="Turn camera on"><svg width="72" height="72" viewBox="0 0 72 72"><path fill="#fff" d="M9 10L49 50v4c0 5-4 8-9 8H9c-5 0-9-3-9-8V18c0-4 3-7 6-8zM21 10h19c5 0 9 4 9 8v20zM53 28l13-11c2-2 5-1 5 2v35c0 2-1 3-2 2L53 41z"/><path stroke="#fff" stroke-width="4" stroke-linecap="round" d="M2 2l68 68"/></svg></button>
  <button aria-label="Unmute"><svg width="72" height="72"><use href="#mic-off"/></svg></button>
  <button aria-label="Speaker"><svg width="72" height="72" viewBox="0 0 72 72"><path fill="#fff" d="M7 20h15L41 5c2-1 5 0 5 2v58c0 2-3 3-5 2L22 52H7c-4 0-6-3-6-6V26c0-3 2-6 6-6z"/><path fill="none" stroke="#fff" stroke-width="4" stroke-linecap="round" d="M54 25c4 7 4 15 0 22M62 16c9 12 9 28 0 40"/></svg></button>
  <button aria-label="More"><svg width="72" height="72" viewBox="0 0 72 72" fill="#fff"><circle cx="12" cy="36" r="8"/><circle cx="36" cy="36" r="8"/><circle cx="60" cy="36" r="8"/></svg></button>
  <button class="hangup" aria-label="Hang up"><svg width="72" height="34" viewBox="0 0 72 34"><path fill="#fff" d="M0 18C1 6 15 0 36 0s35 6 36 18c0 5 0 10-3 13-1 2-3 2-5 1l-10-3c-3-1-5-3-5-6l-1-7c-4-2-20-2-24 0l-1 7c0 3-2 5-5 6L8 32c-2 1-4 1-5-1-3-3-3-8-3-13z"/></svg></button>
</div>

<nav class="sysnav">
  <button aria-label="Recents"><svg width="40" height="40" viewBox="0 0 40 40" stroke="#3f3f3f" stroke-width="3"><path d="M2 4h36M2 19h36M2 34h36"/></svg></button>
  <button aria-label="Home"><svg width="40" height="40" viewBox="0 0 40 40" fill="none" stroke="#3f3f3f" stroke-width="3"><rect x="3" y="3" width="34" height="34" rx="8"/></svg></button>
  <button aria-label="Back"><svg width="40" height="40" viewBox="0 0 40 40" fill="none" stroke="#3f3f3f" stroke-width="3"><path stroke-linejoin="round" d="M37 2v36L4 23c-3-2-3-4 0-6z"/></svg></button>
</nav>
</body>
</html>
```
FILE: styles.css
```css
*{box-sizing:border-box}
body{margin:0;min-height:100vh;display:flex;flex-direction:column;background:#1e1e1e;color:#fff;font-family:Roboto,sans-serif}
button{border:0;padding:0;margin:0;background:none;color:inherit;font:inherit;display:flex;align-items:center;justify-content:center;white-space:nowrap}
a{color:inherit;text-decoration:none}
h1,h2,p{margin:0;font:inherit}
svg{flex:none;display:block}
.defs{position:absolute;width:0;height:0}

/* phone status bar */
.statusbar{height:96px;padding:36px 68px 0 70px;display:flex;justify-content:space-between;background:#252525}
.status-left,.status-right{display:flex;align-items:center;height:60px}
.status-left{gap:22px}
.clock{font-size:38px;font-weight:300;line-height:44px;margin-right:6px}
.status-right{gap:16px}
.speed{display:flex;flex-direction:column;align-items:center;font-weight:700}
.speed b{font-size:23px;line-height:24px}
.speed small{font-size:17px;line-height:18px}
.volte{display:flex;flex-direction:column;font-weight:700;font-size:15px;line-height:16px}
.signal text{font-size:18px}
.battery{width:50px;height:29px;border:3px solid #fff;border-radius:9px;font-size:20px;line-height:23px;text-align:center;background:linear-gradient(90deg,#555 43%,transparent 43%)}

/* shared screen */
.stage{flex:1;display:grid;grid-template-rows:1fr auto 1fr;padding:0 6px}
.desktop{grid-row:2;position:relative;min-width:0;background:#e6e6e6;color:#444;font-family:"Open Sans",sans-serif;font-size:10px;line-height:14px}
.titlebar{height:27px;display:grid;grid-template-columns:1fr auto 1fr;align-items:center;background:#227447;color:#e6f2ea}
.quick{display:flex;align-items:center;gap:7px;padding-left:17px}
.white,.dim{filter:brightness(3)}
.dim,.faint{opacity:.5}
.winbtns{display:flex;justify-content:flex-end;gap:28px;padding-right:15px}
.tabs{height:20px;display:flex;align-items:center;background:#227447;color:#e3f1e8}
.tab{text-align:center;line-height:20px}
.file{width:52px}
.home{width:42px;background:#f3f3f3;color:#227447}
.insert{width:42px}.layout{width:68px}.formulas{width:60px}.data{width:34px}.review{width:48px}.view{width:36px}
.tell{display:flex;align-items:center;gap:4px;margin-left:8px;color:#b9dcc8}
.user{margin-left:auto;margin-right:8px;font-size:9px}
.share{height:20px;width:50px;gap:4px;margin-right:9px;background:#0d5c31}

.ribbon{height:73px;display:flex;padding:4px 0 0;background:#f1f0f1}
.group{height:69px;display:flex;flex-direction:column;border-right:1px solid #d5d5d5;min-width:0}
.group .body{height:57px;display:flex}
.group h2{position:relative;font-size:9px;line-height:10px;text-align:center;color:#6b6b6b}
.group h2 svg{position:absolute;right:4px;top:2px}
.g-clip{flex:122 1 0}.g-font{flex:146 1 0}.g-align{flex:199 1 0}.g-num{flex:102 1 0}.g-styles{flex:144 1 0}.g-cells{flex:105 1 0}.g-edit{flex:142 1 0}
.big{flex:1;flex-direction:column;justify-content:flex-start;line-height:13px}
.big>svg:first-child{margin:1px 0 3px}
.big>span{display:flex;align-items:center;gap:3px}
.big .c{margin-top:5px}
.stack{display:flex;flex-direction:column;gap:2px}
.stack button{justify-content:flex-start;gap:3px;height:16px}
.g-clip .big{flex:0 0 37px}
.g-clip .stack{font-size:9px}
.g-edit .stack{padding-left:5px;flex:0 0 70px}
.g-edit .big{flex:0 0 34px}
.c2{margin-left:3px}
.rows{flex-direction:column;gap:7px;padding:5px 2px 0}
.row{height:17px;display:flex;align-items:center}
.row hr{width:1px;height:12px;margin:0 3px;border:0;background:#d0d0d0}
.tools{flex:0 0 96px;display:flex;align-items:center}
.row.spread{justify-content:space-between;padding:0 3px}
.row.spread hr{margin:0}
.combo{position:relative;display:flex;background:#fff;border:1px solid #d0d0d0;height:17px}
.combo>svg{position:absolute;right:4px;top:6px;pointer-events:none}
.combo select,.combo input{appearance:none;border:0;padding:0 2px;margin:0;width:100%;background:none;color:#444;font:9px/14px "Open Sans",sans-serif;outline:0}
.face{width:75px}.size{width:34px;border-left:0}.full{width:100%}
.grow{flex:1;font-size:12px}
.grow sup{font-size:6px;line-height:6px;color:#3f74b5;align-self:flex-start}
.a2{font-size:11px}
.spread button{font-size:12px;width:14px}
.spread .red{height:15px;line-height:12px;border-bottom:3px solid #e0141b}
.ic{width:17px;height:17px}
.on{background:#c8c8c8}
.wide{height:17px;gap:2px;padding:0 3px 0 1px}
.wide .c{margin-left:4px}
.sym{font-size:13px}
.spread .dec{flex-direction:column;align-items:flex-end;font-size:7px;line-height:7px}
.dec em{font-style:normal;color:#3f74b5}
.collapse{flex:108 1 0;align-self:flex-end;justify-content:flex-end}
.collapse svg{margin:0 8px 5px 0}
.g-styles .cf{flex:0 0 62px}.g-styles .ft{flex:0 0 46px}.g-styles .cs{flex:0 0 34px}

.formulabar{height:71px;display:flex;padding:9px 4px 0;align-items:flex-start}
.formulabar .name{width:84px;height:19px}
.grip{margin:4px 12px 0 11px}
.fx{width:91px;height:19px;display:flex;align-items:center;justify-content:space-around;background:#fff;margin-right:3px}
.fx i{font-family:"Liberation Serif",serif;font-size:13px}
.fx small{font-size:9px}
.formula{flex:1;height:52px;display:flex;background:#fff;border-bottom:1px solid #c8c8c8;padding:0 4px 0 9px}
.formula textarea{flex:1;border:0;padding:3px 0;margin:0;resize:none;background:none;color:#444;font:10px/14px "Open Sans",sans-serif;outline:0}
.formula svg{margin-top:6px}

.grid{position:relative;display:flex;height:338px;background:#fff;overflow:hidden}
table{flex:1;width:100%;height:338px;border-collapse:separate;border-spacing:0;table-layout:fixed;color:#111}
th,td{padding:0;vertical-align:top;text-align:left}
.w-n{width:28px}.w-g{width:238px}.w-h{width:161px}.w-i{width:169px}.w-j{width:159px}.w-k{width:183px}.w-nn{width:35px}.w-p{width:78px}
thead th{height:15px;background:#e6e6e6;border-right:1px solid #ccc;border-bottom:1px solid #aaa;font:13px/13px "Liberation Sans",sans-serif;text-align:center}
thead .corner{background:linear-gradient(135deg,transparent 62%,#b5b5b5 62%)}
thead .sel{background:#d2d2d4;border-bottom:2px solid #217346;color:#217346}
tbody th{background:#e6e6e6;border-right:1px solid #287058;font:13px/16px "Noto Sans",sans-serif;text-align:center;vertical-align:bottom}
.head td{position:relative;height:40px;background:#8eb1e2;border-right:1px solid #223;border-bottom:1px solid #999;padding:1px 1px 0 2px;font-family:Lato,sans-serif;font-size:12px;font-weight:900;line-height:16px;white-space:nowrap}
.head th{border-bottom:1px solid #aaa}
.head td button{position:absolute;right:1px;bottom:1px;width:13px;height:13px;background:#fff}
.head td.blank{background:#fff;border-right-color:#ddd;border-bottom-color:#ccc}
.spill span{position:absolute;left:0;top:2px;width:71px;overflow:hidden;display:flex;justify-content:flex-end;font-size:14px;line-height:18px;z-index:1}
.head td.spill{border-right-color:#8eb1e2}
.cells th{background:#d2d2d4}
.cells td{white-space:pre;border-right:1px solid #333;font-size:13px;line-height:18px;padding-left:2px}
.cells td:nth-child(5),.cells td:nth-child(6){border-right-color:#2c6e55}
.cells td:last-child{border-right-color:#ddd}
.cells .ans{text-align:center;font-size:14px;line-height:20px;padding:0}
.note{line-height:16px;color:#c4161c}
.note span{color:#111}
.vscroll{width:17px;background:#d9d7da;display:flex;flex-direction:column;align-items:center;gap:6px;border-left:2px solid #e6e6e6}
.vscroll button{width:14px;height:14px;background:#fff}
.vscroll .thumb{width:14px;height:14px;background:#fff;border:1px solid #bbb}
.vscroll .down{margin-top:auto}
.cursor{position:absolute;left:91%;top:221px}

.sheets{height:19px;display:flex;align-items:center;border-top:1px solid #aaa;background:#e6e6e6}
.arrows{width:66px;display:flex;justify-content:space-evenly;color:#aaa}
.sheet{width:30px;height:17px;background:#fff;border-bottom:2px solid #217346;color:#217346;font-weight:700;font-size:11px}
.plus{margin-left:22px}
.hscroll{margin-left:auto;width:436px;height:18px;display:flex;align-items:center;padding-right:18px}
.hscroll button{width:13px;height:13px;background:#fff}
.dots{width:18px;text-align:center;color:#888}
.track{flex:1;height:13px;background:#d9d9d9;display:flex;justify-content:flex-end;padding-right:23px}
.track .thumb{width:62%;background:#fff;border-right:1px solid #bbb}
.xlstatus{height:19px;display:flex;align-items:center;border-top:1px solid #bbb;background:#f0eff0;padding:0 4px;font-size:8px;color:#666}
.ready{width:33px}
.zoom{margin-left:auto;display:flex;align-items:center}
.pm{font-size:14px;width:14px;text-align:center}
.zoom svg{margin-right:5px}
.pct{font-size:9px;margin-left:5px}
input[type=range]{appearance:none;width:84px;height:12px;margin:0;background:linear-gradient(#aaa,#aaa) center/100% 1px no-repeat}
input[type=range]::-webkit-slider-thumb{appearance:none;width:4px;height:10px;background:#666}
.toast{position:absolute;right:162px;bottom:33px;width:234px;height:23px;padding:6px 14px 0 10px;display:flex;align-items:center;justify-content:space-between;background:#080808;color:#e8e8e8;font-size:11px}
.toast time{font-size:9px}

.taskbar{height:33px;display:flex;align-items:center;background:linear-gradient(90deg,#24333a,#2c2f31 60%,#1f3138);color:#fff}
.start{width:40px;height:33px}
.search{flex:1;min-width:0;height:32px;display:flex;align-items:center;gap:10px;padding-left:10px;background:#f2f2f2}
.search input{flex:1;min-width:0;border:0;padding:0;background:none;font:12px/16px "Open Sans",sans-serif;outline:0}
.search input::placeholder{color:#444;opacity:1}
.apps{display:flex;width:317px;gap:1px}
.apps>span{position:relative;flex:1;height:33px;display:flex;align-items:center;justify-content:center}
.apps>.taskview{flex:0 0 43px;padding-right:4px}
.run{box-shadow:inset 0 -2px #7fb4dc}
.active{background:#4f5d60}
.skype{background:#b4662c;box-shadow:none}
.nine{position:absolute;right:9px;bottom:5px;font-size:8px;line-height:10px;font-weight:700}
.tray{display:flex;width:322px;justify-content:space-around;padding-left:1px}
.tray svg{width:14px;height:14px}
.datetime{width:57px;display:flex;flex-direction:column;align-items:center;font-size:10px;line-height:16px}
.notif{margin:0 16px 0 11px}
.edge{width:1px;height:33px;margin-right:3px;background:#697378}

/* active speaker */
.speaker{grid-row:3;justify-self:start;align-self:end;margin:0 0 15px 12px;height:49px;padding:0 9px 0 6px;display:flex;align-items:center;gap:12px;border-radius:24px;background:#242424;font-size:36px;line-height:42px}
.speaker span{padding-top:5px}

/* participants */
.people{display:flex;gap:6px;padding:6px 3px 3px}
.tile{flex:274 1 0;min-width:0;height:274px;padding-top:69px;display:flex;flex-direction:column;align-items:center;gap:13px;border-radius:12px;background:#282828;font-size:36px;line-height:42px}
.cut{flex:18 1 0;padding:0;border-radius:0 12px 12px 0}
.avatar{width:137px;height:137px;border-radius:50%;background:#66a1cc}
.name-row{display:flex;align-items:center;gap:13px;padding-left:22px;white-space:nowrap}
.me{flex:210 1 0;height:277px;padding:0;justify-content:center}
.me .avatar{width:105px;height:105px}

/* call controls */
.controls{height:228px;display:flex;justify-content:space-between;align-items:center;padding:0 42px;border-radius:10px;background:#303030}
.controls button{width:180px;height:180px}
.controls .hangup{border-radius:20px;background:#9d1b36}
.sysnav{height:132px;display:flex;justify-content:center;gap:217px;background:#000}
```
